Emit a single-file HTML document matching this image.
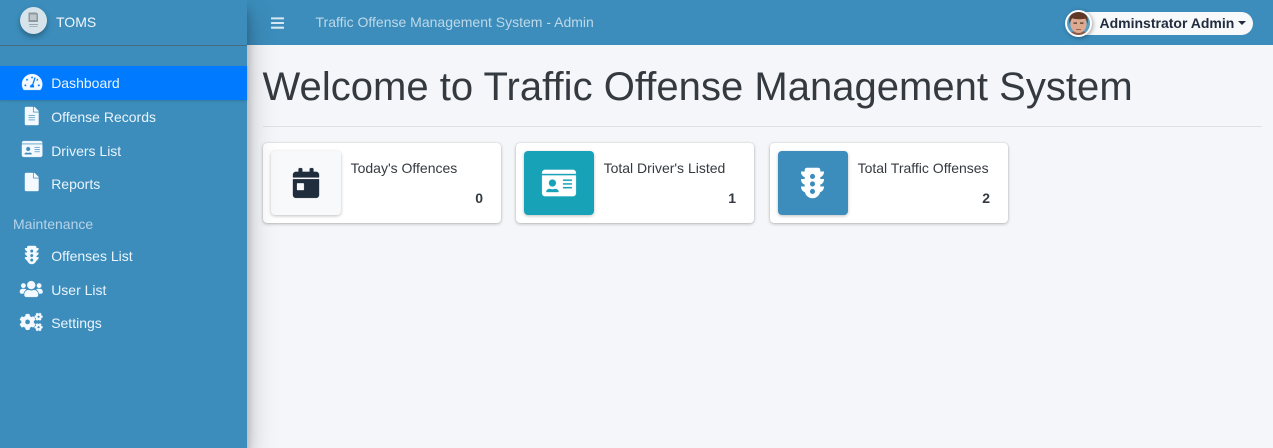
<!DOCTYPE html>
<html>
<head>
<meta charset="utf-8">
<style>
html,body{margin:0;padding:0;width:1273px;height:448px;overflow:hidden;background:#f4f6f9;font-family:"Liberation Sans",sans-serif;color:#343a40}
*{box-sizing:border-box}
.abs,svg{position:absolute}
svg{overflow:visible}
#top{position:absolute;left:0;top:0;width:1273px;height:45px;background:#3c8dbc}
#side{position:absolute;left:0;top:0;width:247px;height:448px;background:#3c8dbc;box-shadow:0 14px 28px rgba(0,0,0,.25),0 10px 10px rgba(0,0,0,.22)}
#sideline{position:absolute;left:0;top:45px;width:247px;height:1px;background:#4b6b7e}
#active{position:absolute;left:0;top:66px;width:247px;height:34px;background:#007bff;box-shadow:0 1px 2px rgba(0,0,0,.15)}
.nav{position:absolute;left:51.2px;font-size:14px;line-height:20px;color:#eaf4fc;white-space:nowrap}
svg.i{fill:#f4f9ff;stroke:#f4f9ff;stroke-width:12}
.title{position:absolute;left:315.5px;top:12px;font-size:14px;line-height:20px;color:rgba(255,255,255,.66);white-space:nowrap}
h1{position:absolute;left:262.5px;top:63px;margin:0;font-size:40px;letter-spacing:.02px;line-height:48px;font-weight:400;color:#343a40;white-space:nowrap}
#hr{position:absolute;left:263px;top:126px;width:999px;height:1px;background:#dfe1e5}
.card{position:absolute;top:143px;width:238px;height:80px;background:#fff;border-radius:4px;box-shadow:0 0 1px rgba(0,0,0,.2),0 1px 3px rgba(0,0,0,.25)}
.ico{position:absolute;left:8px;top:8px;width:70px;height:64px;border-radius:4px;box-shadow:0 1px 3px rgba(0,0,0,.25)}
.lab{position:absolute;left:87.6px;top:15px;font-size:14px;line-height:20px;color:#343a40;white-space:nowrap}
.num{position:absolute;right:18px;top:45px;font-size:14px;line-height:20px;font-weight:700;color:#343a40}
#pill{position:absolute;left:1072px;top:12px;width:181px;height:23px;background:#f8f9fa;border-radius:12px}
#name{position:absolute;left:1099.5px;top:13px;font-size:14px;line-height:20px;font-weight:700;color:#212d3f;white-space:nowrap}
#caret{position:absolute;left:1238px;top:21px;width:0;height:0;border-left:4.2px solid transparent;border-right:4.2px solid transparent;border-top:4.2px solid #212d3f}
</style>
</head>
<body>
<div id="top"></div>

<svg style="left:271px;top:14.5px;width:13px;height:16px;fill:#d8e8f3" viewBox="0 0 448 512"><path d="M16 132h416c8.837 0 16-7.163 16-16V76c0-8.837-7.163-16-16-16H16C7.163 60 0 67.163 0 76v40c0 8.837 7.163 16 16 16zm0 160h416c8.837 0 16-7.163 16-16v-40c0-8.837-7.163-16-16-16H16c-8.837 0-16 7.163-16 16v40c0 8.837 7.163 16 16 16zm0 160h416c8.837 0 16-7.163 16-16v-40c0-8.837-7.163-16-16-16H16c-8.837 0-16 7.163-16 16v40c0 8.837 7.163 16 16 16z"/></svg>
<div class="title">Traffic Offense Management System - Admin</div>

<div id="pill"></div>
<svg style="left:1065px;top:10px;width:27px;height:27px;filter:drop-shadow(1px 1px 2px rgba(0,0,0,.35))" viewBox="0 0 27 27">
<circle cx="13.500" cy="13.500" r="13.500" fill="#fff"/>
<clipPath id="av"><circle cx="13.500" cy="13.500" r="11.500"/></clipPath>
<g clip-path="url(#av)">
<rect width="27" height="27" fill="#5c9cc0"/>
<path d="M3 27c1-5 5-6 10.500-6S23 22 24 27z" fill="#8a5a46"/>
<ellipse cx="13.500" cy="14" rx="8" ry="9" fill="#dcaa90"/>
<path d="M4.500 14C3 5 8 1.500 13.500 1.500S24 5 22.500 14c-.5-2.500-1-4-2-5.500-3 1-10 1-13.500-.2C6 10 5 12 4.500 14z" fill="#603826"/>
<rect x="8.500" y="12.500" width="3.500" height="1.200" fill="#4a2e22"/><rect x="15" y="12.500" width="3.500" height="1.200" fill="#4a2e22"/>
<rect x="11" y="19" width="5" height="1" fill="#a5604c"/>
</g>
</svg>
<div id="name">Adminstrator Admin</div>
<div id="caret"></div>

<h1>Welcome to Traffic Offense Management System</h1>
<div id="hr"></div>

<div class="card" style="left:263px">
  <div class="ico" style="background:#f8f9fa"></div>
  <svg style="left:29.500px;top:25px;width:26px;height:30px;fill:#1f2d3d;stroke:#1f2d3d;stroke-width:6" viewBox="0 0 448 512"><path d="M0 464c0 26.500 21.500 48 48 48h352c26.500 0 48-21.500 48-48V192H0v272zm64-192c0-8.800 7.200-16 16-16h96c8.800 0 16 7.200 16 16v96c0 8.800-7.200 16-16 16H80c-8.800 0-16-7.200-16-16v-96zM400 64h-48V16c0-8.800-7.200-16-16-16h-32c-8.800 0-16 7.200-16 16v48H160V16c0-8.800-7.200-16-16-16h-32c-8.800 0-16 7.200-16 16v48H48C21.500 64 0 85.500 0 112v48h448v-48c0-26.500-21.500-48-48-48z"/></svg>
  <div class="lab">Today's Offences</div>
  <div class="num">0</div>
</div>

<div class="card" style="left:516px">
  <div class="ico" style="background:#17a2b8"></div>
  <svg style="left:26px;top:25px;width:34px;height:30px;fill:#fff;stroke:#fff;stroke-width:6" viewBox="0 0 576 512"><path d="M528 32H48C21.500 32 0 53.500 0 80v16h576V80c0-26.500-21.500-48-48-48zM0 432c0 26.500 21.500 48 48 48h480c26.500 0 48-21.500 48-48V128H0v304zm352-232c0-4.400 3.600-8 8-8h144c4.400 0 8 3.600 8 8v16c0 4.400-3.600 8-8 8H360c-4.400 0-8-3.600-8-8v-16zm0 64c0-4.400 3.600-8 8-8h144c4.400 0 8 3.600 8 8v16c0 4.400-3.600 8-8 8H360c-4.400 0-8-3.600-8-8v-16zm0 64c0-4.400 3.600-8 8-8h144c4.400 0 8 3.600 8 8v16c0 4.400-3.600 8-8 8H360c-4.400 0-8-3.600-8-8v-16zM176 192c35.300 0 64 28.700 64 64s-28.700 64-64 64-64-28.700-64-64 28.700-64 64-64zM67.100 396.200C75.500 370.500 99.600 352 128 352h8.200c12.300 5.100 25.700 8 39.800 8s27.600-2.900 39.800-8h8.200c28.400 0 52.500 18.500 60.900 44.200 3.200 9.900-5.200 19.800-15.600 19.800H82.700c-10.400 0-18.800-10-15.600-19.800z"/></svg>
  <div class="lab">Total Driver's Listed</div>
  <div class="num">1</div>
</div>

<div class="card" style="left:770px">
  <div class="ico" style="background:#3c8dbc"></div>
  <svg style="left:31px;top:25px;width:23px;height:30px;fill:#fff;stroke:#fff;stroke-width:10" viewBox="0 0 384 512"><path d="M384 192h-64v-37.880c37.200-13.220 64-48.380 64-90.120h-64V32c0-17.670-14.330-32-32-32H96C78.330 0 64 14.330 64 32v32H0c0 41.740 26.800 76.900 64 90.120V192H0c0 41.740 26.800 76.900 64 90.120V320H0c0 42.840 28.250 78.690 66.990 91.050C79.420 468.270 129.950 512 192 512s112.580-43.730 125.010-100.950C355.750 398.690 384 362.840 384 320h-64v-37.880c37.200-13.220 64-48.380 64-90.120zM192 448c-26.510 0-48-21.490-48-48s21.490-48 48-48 48 21.490 48 48-21.490 48-48 48zm0-128c-26.510 0-48-21.490-48-48s21.490-48 48-48 48 21.490 48 48-21.490 48-48 48zm0-128c-26.510 0-48-21.490-48-48 0-26.510 21.490-48 48-48s48 21.490 48 48c0 26.510-21.490 48-48 48z"/></svg>
  <div class="lab">Total Traffic Offenses</div>
  <div class="num">2</div>
</div>

<div id="side"></div>
<div id="sideline"></div>
<div id="active"></div>

<svg style="left:20px;top:7px;width:27px;height:27px;filter:drop-shadow(0 3px 3px rgba(0,0,0,.3))" viewBox="0 0 27 27">
<circle cx="13.500" cy="13.500" r="13.500" fill="#d6e3ea"/>
<path d="M8.500 5.500h8l1.500 1.500v8h-9.500z" fill="#8d979c"/><rect x="10" y="7.500" width="6.500" height="5.500" fill="#bcc8cd"/>
<rect x="9" y="17" width="9" height="1" fill="#9ba6ab"/><rect x="9.500" y="19" width="8" height="1" fill="#a7b2b7"/>
</svg>
<div class="abs" style="left:56px;top:12px;font-size:14px;line-height:20px;color:#f2f8fc">TOMS</div>

<svg class="i" style="left:21.500px;top:73px;width:20.250px;height:18px" viewBox="0 0 576 512"><path d="M288 32C128.940 32 0 160.940 0 320c0 52.800 14.250 102.260 39.060 144.800 5.610 9.620 16.300 15.200 27.440 15.200h443c11.140 0 21.830-5.580 27.440-15.200C561.750 422.260 576 372.800 576 320c0-159.060-128.940-288-288-288zm0 64c14.710 0 26.580 10.130 30.320 23.650-1.110 2.260-2.640 4.230-3.450 6.670l-9.220 27.670c-5.130 3.490-10.970 6.010-17.640 6.010-17.670 0-32-14.330-32-32S270.330 96 288 96zM96 384c-17.670 0-32-14.330-32-32s14.330-32 32-32 32 14.330 32 32-14.330 32-32 32zm48-160c-17.670 0-32-14.330-32-32s14.330-32 32-32 32 14.330 32 32-14.330 32-32 32zm246.770-72.410l-61.330 184C343.130 347.330 352 364.540 352 384c0 11.720-3.380 22.550-8.880 32H232.880c-5.500-9.450-8.880-20.280-8.880-32 0-33.940 26.500-61.430 59.900-63.590l61.340-184.010c4.170-12.560 17.730-19.450 30.360-15.170 12.570 4.190 19.350 17.790 15.170 30.360zm14.660 57.200l15.520-46.550c3.470-1.290 7.130-2.230 11.050-2.230 17.670 0 32 14.330 32 32s-14.330 32-32 32c-11.380-.01-20.890-6.280-26.570-15.220zM480 384c-17.670 0-32-14.330-32-32s14.330-32 32-32 32 14.330 32 32-14.330 32-32 32z"/></svg>
<div class="nav" style="top:73px">Dashboard</div>

<svg class="i" style="left:24.500px;top:106.500px;width:13.500px;height:18px" viewBox="0 0 384 512"><path d="M224 136V0H24C10.700 0 0 10.700 0 24v464c0 13.300 10.700 24 24 24h336c13.300 0 24-10.700 24-24V160H248c-13.200 0-24-10.800-24-24zm64 236c0 6.600-5.400 12-12 12H108c-6.600 0-12-5.400-12-12v-8c0-6.600 5.400-12 12-12h168c6.600 0 12 5.400 12 12v8zm0-64c0 6.600-5.400 12-12 12H108c-6.600 0-12-5.400-12-12v-8c0-6.600 5.400-12 12-12h168c6.600 0 12 5.400 12 12v8zm0-72v8c0 6.600-5.400 12-12 12H108c-6.600 0-12-5.400-12-12v-8c0-6.600 5.400-12 12-12h168c6.600 0 12 5.400 12 12zm96-114.100v6.100H256V0h6.100c6.400 0 12.500 2.500 17 7l97.900 98c4.500 4.500 7 10.600 7 16.900z"/></svg>
<div class="nav" style="top:107px">Offense Records</div>

<svg class="i" style="left:21.500px;top:140px;width:20.250px;height:18px" viewBox="0 0 576 512"><path d="M528 32H48C21.500 32 0 53.500 0 80v16h576V80c0-26.500-21.500-48-48-48zM0 432c0 26.500 21.500 48 48 48h480c26.500 0 48-21.500 48-48V128H0v304zm352-232c0-4.400 3.600-8 8-8h144c4.400 0 8 3.600 8 8v16c0 4.400-3.600 8-8 8H360c-4.400 0-8-3.600-8-8v-16zm0 64c0-4.400 3.600-8 8-8h144c4.400 0 8 3.600 8 8v16c0 4.400-3.600 8-8 8H360c-4.400 0-8-3.600-8-8v-16zm0 64c0-4.400 3.600-8 8-8h144c4.400 0 8 3.600 8 8v16c0 4.400-3.600 8-8 8H360c-4.400 0-8-3.600-8-8v-16zM176 192c35.300 0 64 28.700 64 64s-28.700 64-64 64-64-28.700-64-64 28.700-64 64-64zM67.100 396.200C75.500 370.500 99.600 352 128 352h8.200c12.300 5.100 25.700 8 39.800 8s27.600-2.900 39.800-8h8.200c28.400 0 52.500 18.500 60.900 44.200 3.200 9.900-5.200 19.800-15.600 19.800H82.700c-10.400 0-18.800-10-15.600-19.800z"/></svg>
<div class="nav" style="top:141px">Drivers List</div>

<svg class="i" style="left:24.500px;top:173px;width:13.500px;height:18px" viewBox="0 0 384 512"><path d="M224 136V0H24C10.700 0 0 10.700 0 24v464c0 13.300 10.700 24 24 24h336c13.300 0 24-10.700 24-24V160H248c-13.200 0-24-10.800-24-24zm160-14.100v6.100H256V0h6.100c6.400 0 12.500 2.500 17 7l97.900 98c4.500 4.500 7 10.600 7 16.900z"/></svg>
<div class="nav" style="top:174px">Reports</div>

<div class="abs" style="left:13px;top:214px;font-size:14px;line-height:20px;color:#b7d3e8">Maintenance</div>

<svg class="i" style="left:24.500px;top:245.500px;width:13.500px;height:18px" viewBox="0 0 384 512"><path d="M384 192h-64v-37.880c37.200-13.220 64-48.380 64-90.120h-64V32c0-17.670-14.330-32-32-32H96C78.330 0 64 14.330 64 32v32H0c0 41.740 26.800 76.900 64 90.120V192H0c0 41.740 26.800 76.900 64 90.120V320H0c0 42.840 28.250 78.690 66.990 91.050C79.420 468.270 129.950 512 192 512s112.580-43.730 125.010-100.950C355.750 398.690 384 362.840 384 320h-64v-37.880c37.200-13.220 64-48.380 64-90.120zM192 448c-26.510 0-48-21.490-48-48s21.490-48 48-48 48 21.490 48 48-21.490 48-48 48zm0-128c-26.510 0-48-21.490-48-48s21.490-48 48-48 48 21.490 48 48-21.490 48-48 48zm0-128c-26.510 0-48-21.490-48-48 0-26.510 21.490-48 48-48s48 21.490 48 48c0 26.510-21.490 48-48 48z"/></svg>
<div class="nav" style="top:246px">Offenses List</div>

<svg class="i" style="left:20px;top:280px;width:22.500px;height:18px" viewBox="0 0 640 512"><path d="M96 224c35.300 0 64-28.700 64-64s-28.700-64-64-64-64 28.700-64 64 28.700 64 64 64zm448 0c35.300 0 64-28.700 64-64s-28.700-64-64-64-64 28.700-64 64 28.700 64 64 64zm32 32h-64c-17.600 0-33.500 7.100-45.100 18.600 40.300 22.100 68.900 62 75.100 109.400h66c17.700 0 32-14.300 32-32v-32c0-35.300-28.700-64-64-64zm-256 0c61.900 0 112-50.100 112-112S381.900 32 320 32 208 82.100 208 144s50.100 112 112 112zm76.800 32h-8.300c-20.800 10-43.900 16-68.500 16s-47.600-6-68.500-16h-8.300C179.600 288 128 339.600 128 403.200V432c0 26.500 21.500 48 48 48h288c26.500 0 48-21.500 48-48v-28.800c0-63.600-51.600-115.200-115.200-115.200zm-223.700-13.400C161.500 263.100 145.600 256 128 256H64c-35.300 0-64 28.700-64 64v32c0 17.700 14.300 32 32 32h65.900c6.300-47.400 34.900-87.300 75.200-109.400z"/></svg>
<div class="nav" style="top:280px">User List</div>

<svg class="i" style="left:20px;top:312.500px;width:22.500px;height:18px" viewBox="0 0 640 512"><path d="M512.100 191l-8.200 14.300c-3 5.300-9.400 7.500-15.100 5.400-11.800-4.400-22.600-10.700-32.100-18.600-4.600-3.800-5.800-10.500-2.800-15.700l8.200-14.300c-6.900-8-12.300-17.300-15.900-27.400h-16.500c-6 0-11.200-4.300-12.200-10.300-2-12-2.100-24.600 0-37.100 1-6 6.200-10.400 12.200-10.400h16.500c3.600-10.100 9-19.400 15.900-27.400l-8.200-14.300c-3-5.200-1.900-11.900 2.800-15.700 9.500-7.900 20.400-14.200 32.100-18.600 5.700-2.100 12.100.1 15.100 5.400l8.200 14.300c10.500-1.900 21.200-1.900 31.700 0L552 6.300c3-5.300 9.400-7.500 15.100-5.400 11.800 4.400 22.600 10.700 32.100 18.600 4.600 3.800 5.800 10.500 2.800 15.700l-8.200 14.300c6.900 8 12.300 17.300 15.900 27.400h16.500c6 0 11.200 4.300 12.200 10.300 2 12 2.100 24.600 0 37.100-1 6-6.200 10.400-12.200 10.400h-16.500c-3.600 10.100-9 19.400-15.900 27.400l8.200 14.300c3 5.200 1.900 11.900-2.800 15.700-9.500 7.900-20.400 14.200-32.100 18.600-5.700 2.100-12.100-.1-15.100-5.400l-8.200-14.300c-10.400 1.900-21.200 1.900-31.700 0zm-10.500-58.800c38.500 29.600 82.400-14.300 52.800-52.800-38.500-29.700-82.400 14.300-52.800 52.800zM386.300 286.100l33.700 16.800c10.100 5.800 14.500 18.100 10.500 29.100-8.900 24.200-26.400 46.400-42.600 65.800-7.400 8.900-20.200 11.100-30.300 5.300l-29.100-16.800c-16 13.700-34.600 24.600-54.900 31.700v33.600c0 11.600-8.300 21.600-19.700 23.600-24.600 4.200-50.400 4.400-75.900 0-11.500-2-20-11.900-20-23.600V418c-20.300-7.200-38.900-18-54.900-31.700L74 403c-10 5.800-22.900 3.600-30.300-5.300-16.200-19.400-33.300-41.600-42.200-65.700-4-10.900.4-23.200 10.500-29.100l33.300-16.800c-3.900-20.900-3.900-42.400 0-63.400L12 205.800c-10.100-5.800-14.600-18.100-10.500-29 8.900-24.200 26-46.400 42.200-65.800 7.400-8.900 20.200-11.100 30.300-5.300l29.100 16.800c16-13.700 34.600-24.600 54.900-31.700V57.100c0-11.500 8.200-21.500 19.600-23.500 24.600-4.200 50.500-4.400 76-.1 11.500 2 20 11.900 20 23.600v33.600c20.300 7.200 38.900 18 54.900 31.700l29.100-16.800c10-5.800 22.900-3.600 30.300 5.300 16.200 19.400 33.200 41.600 42.100 65.800 4 10.900.1 23.200-10 29.100l-33.700 16.800c3.900 21 3.900 42.500 0 63.500zm-117.600 21.100c59.200-77-28.700-164.900-105.700-105.700-59.200 77 28.700 164.900 105.700 105.700zm243.400 182.700l-8.200 14.300c-3 5.300-9.400 7.500-15.100 5.400-11.800-4.400-22.600-10.700-32.100-18.600-4.600-3.800-5.800-10.500-2.800-15.700l8.200-14.300c-6.900-8-12.300-17.300-15.900-27.400h-16.500c-6 0-11.200-4.300-12.200-10.300-2-12-2.100-24.600 0-37.100 1-6 6.200-10.400 12.200-10.400h16.500c3.600-10.100 9-19.400 15.900-27.400l-8.200-14.300c-3-5.200-1.900-11.900 2.800-15.700 9.500-7.900 20.400-14.200 32.100-18.600 5.700-2.100 12.100.1 15.100 5.400l8.200 14.300c10.500-1.900 21.200-1.900 31.700 0l8.200-14.300c3-5.300 9.400-7.500 15.100-5.400 11.800 4.400 22.600 10.700 32.100 18.600 4.600 3.800 5.800 10.500 2.800 15.700l-8.200 14.300c6.900 8 12.300 17.300 15.900 27.400h16.500c6 0 11.200 4.300 12.200 10.300 2 12 2.100 24.600 0 37.100-1 6-6.200 10.400-12.200 10.400h-16.500c-3.600 10.100-9 19.400-15.900 27.400l8.200 14.300c3 5.200 1.900 11.900-2.800 15.700-9.500 7.900-20.400 14.200-32.100 18.600-5.700 2.100-12.100-.1-15.100-5.400l-8.200-14.300c-10.400 1.900-21.200 1.900-31.700 0zM501.600 431c38.500 29.600 82.400-14.300 52.800-52.800-38.500-29.600-82.400 14.300-52.800 52.800z"/></svg>
<div class="nav" style="top:313px">Settings</div>
</body>
</html>
